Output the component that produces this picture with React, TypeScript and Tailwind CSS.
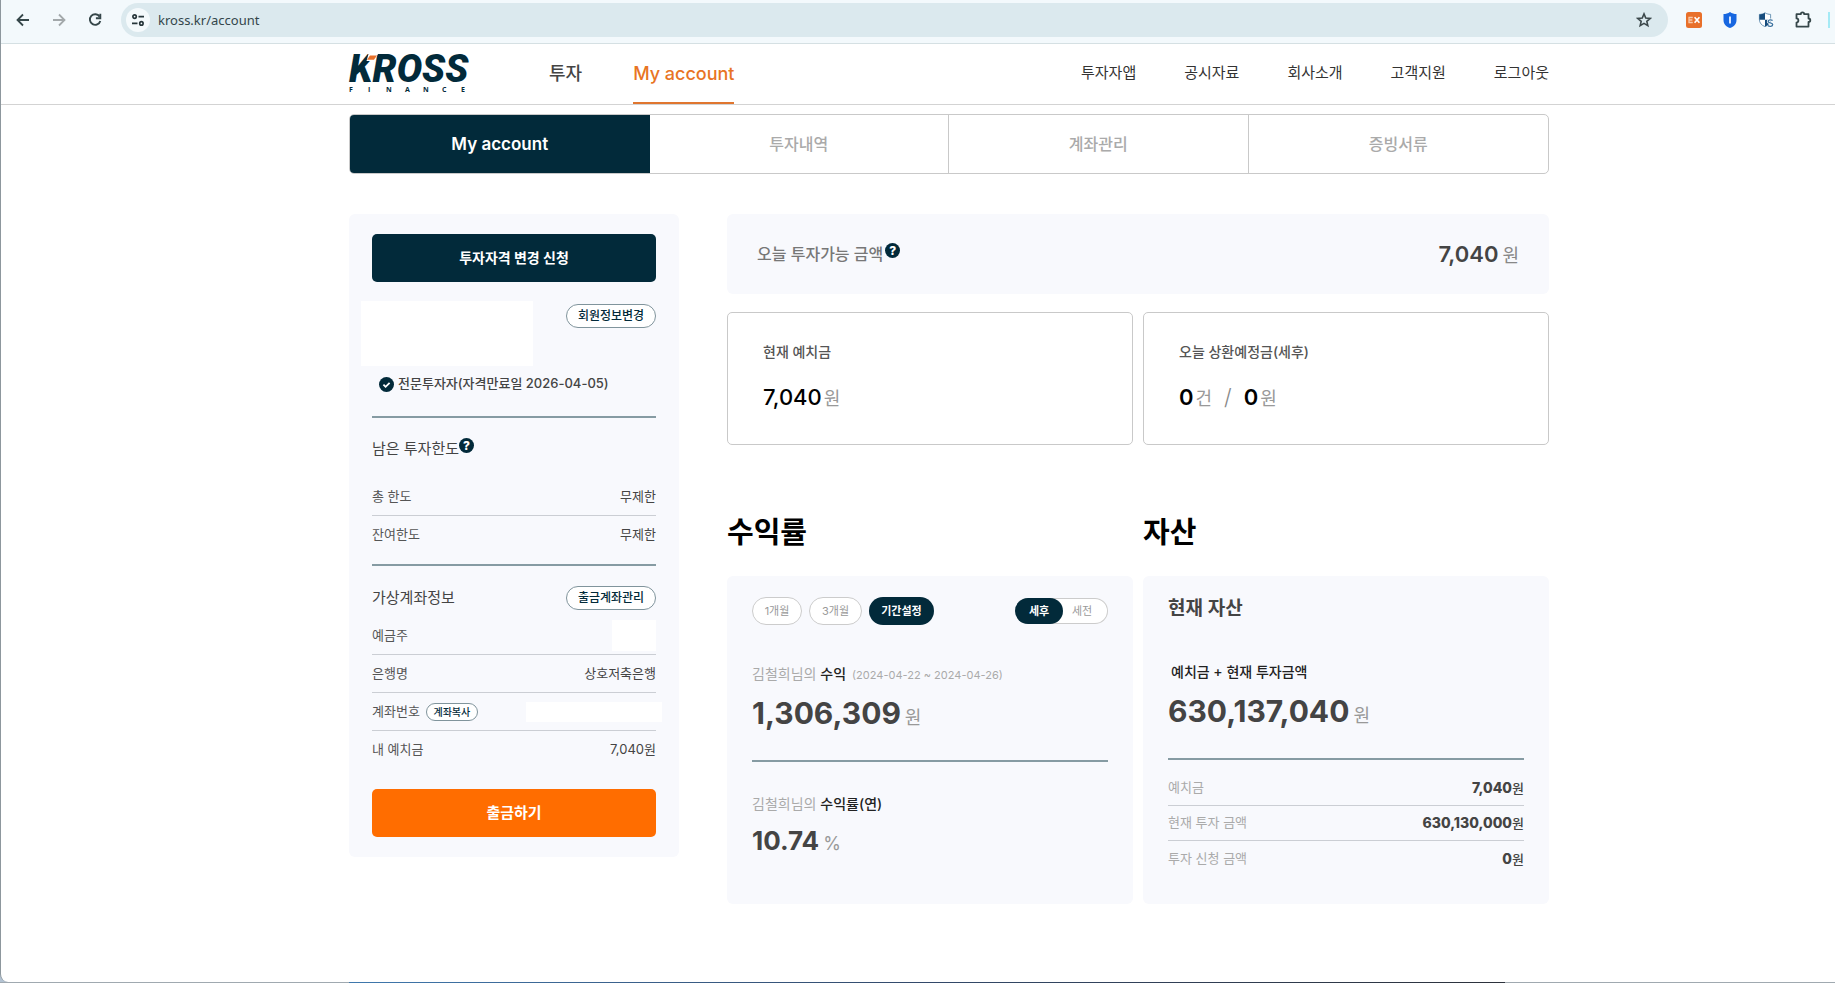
import type { ReactNode } from "react";

function ChromeBar() {
  return (
    <div className="flex h-11 items-center border-b border-[#d5e0e3] bg-[#f3f9fc] pb-1">
      <div className="flex items-center pl-2.5">
        <button type="button" aria-label="뒤로" className="flex h-6 w-6 items-center justify-center">
          <svg width="16" height="16" viewBox="0 0 16 16" fill="none" stroke="#36474a" strokeWidth="1.8">
            <path d="M14 8H3M8 2.5 2.5 8 8 13.5" />
          </svg>
        </button>
        <button type="button" aria-label="앞으로" className="ml-3 flex h-6 w-6 items-center justify-center">
          <svg width="16" height="16" viewBox="0 0 16 16" fill="none" stroke="#a3a9ab" strokeWidth="1.8">
            <path d="M2 8h11M8 2.5 13.5 8 8 13.5" />
          </svg>
        </button>
        <button type="button" aria-label="새로고침" className="ml-3 flex h-6 w-6 items-center justify-center">
          <svg width="16" height="16" viewBox="0 0 16 16" fill="none" stroke="#36474a" strokeWidth="1.9">
            <path d="M12.6 4.6A5.3 5.3 0 1 0 13.3 9" />
            <path d="M13.3 1.8v4.4H8.9" />
          </svg>
        </button>
      </div>
      <div className="ml-3.5 flex h-[34px] flex-1 items-center rounded-full bg-[#dbe9ee] pl-[5px] pr-4">
        <button type="button" aria-label="사이트 정보" className="flex h-6 w-6 items-center justify-center rounded-full bg-[#f5fafc]">
          <svg width="14" height="14" viewBox="0 0 14 14" fill="none" stroke="#27363a" strokeWidth="1.7">
            <circle cx="3.6" cy="3.6" r="1.7" />
            <path d="M7.5 3.6H13M1 10.4h5.5" />
            <circle cx="10.4" cy="10.4" r="1.7" />
          </svg>
        </button>
        <input
          aria-label="주소창"
          defaultValue="kross.kr/account"
          className="ml-2 min-w-0 flex-1 bg-transparent font-['Noto_Sans',sans-serif] text-[13px] leading-5 text-[#33464b] outline-none"
        />
        <button type="button" aria-label="북마크" className="flex h-4 w-4 items-center justify-center">
          <svg width="16" height="16" viewBox="0 0 16 16" fill="none" stroke="#3c484b" strokeWidth="1.6" strokeLinejoin="miter">
            <path d="m8 1.9 1.75 4.1 4.45.4-3.37 2.93 1 4.35L8 11.4l-3.83 2.28 1-4.35L1.8 6.4 6.25 6z" />
          </svg>
        </button>
      </div>
      <div className="flex items-center gap-5 pl-[18px] pr-[5px]">
        <svg width="16" height="16" viewBox="0 0 16 16" role="img" aria-label="EX">
          <rect width="16" height="16" rx="2.5" fill="#e8702a" />
          <path d="M6.8 5.5H3v5h3.8M3 8h3.4" fill="none" stroke="#f9c9a8" strokeWidth="1.3" />
          <path d="m8.6 5.3 4.8 5.4m0-5.4-4.8 5.4" fill="none" stroke="#fff" strokeWidth="1.7" />
        </svg>
        <svg width="16" height="16" viewBox="0 0 16 16" aria-hidden="true">
          <path d="M8 0c2 1.4 4.2 2 6.5 2v6c0 4-2.5 6.6-6.5 8-4-1.4-6.5-4-6.5-8V2C3.8 2 6 1.4 8 0z" fill="#1767e0" />
          <path d="M7 4.5h2v7H7z" fill="#d6e6ff" />
        </svg>
        <svg width="16" height="16" viewBox="0 0 16 16" aria-hidden="true">
          <path d="M7 .8c1.7 1.1 3.6 1.6 5.6 1.6v5c0 3.5-2 5.8-5.6 7.2-3.6-1.4-5.6-3.7-5.6-7.2v-5C3.4 2.4 5.3 1.9 7 .8z" fill="#fff" stroke="#4b7fa5" strokeWidth=".8" />
          <path d="M7 .8v7H1.4V2.4C3.4 2.4 5.3 1.9 7 .8zM7 7.8h5.6c-.2 3.2-2.2 5.5-5.6 6.8z" fill="#174d7d" />
          <path d="M14.6 8.6c-1.3-1.2-4.4-1-4.4.8 0 2 4.5 1 4.5 3.2 0 2-3.4 2.3-4.9.9" fill="none" stroke="#fff" strokeWidth="2.6" />
          <path d="M14.6 8.6c-1.3-1.2-4.4-1-4.4.8 0 2 4.5 1 4.5 3.2 0 2-3.4 2.3-4.9.9" fill="none" stroke="#3d74a0" strokeWidth="1.4" />
        </svg>
        <svg width="18" height="18" viewBox="0 0 18 18" fill="none" stroke="#36474a" strokeWidth="1.8" strokeLinejoin="round" aria-hidden="true">
          <path d="M2.5 3.2h4.3c0-2.4 3.4-2.4 3.4 0h4.3v4.3c2.400 0 2.400 3.400 0 3.400v4.700H2.500v-4c2.500-.3 2.500-4 0-4.200z" />
        </svg>
        <span className="-ml-1 h-4 w-0.5 bg-[#a5eaf5]" />
      </div>
    </div>
  );
}

function Logo() {
  return (
    <svg width="128" height="60" viewBox="-4 -11 128 60" role="img" aria-label="KROSS FINANCE">
      <text x="0" y="27" fontFamily="Roboto, sans-serif" fontSize="38" fontWeight="900" fontStyle="italic" fill="#022a3a">
        KROSS
      </text>
      <path d="M17.5 6 19.5-1H29l-4 7z" fill="#fff" />
      <path d="M18 4.8 21 .5h7l-3 4.300z" fill="#e8702a" />
      <text
        x="0 19 37 56 74 93 112"
        y="37"
        fontFamily="'Open Sans', sans-serif"
        fontSize="7"
        fontWeight="700"
        fill="#022a3a"
      >
        FINANCE
      </text>
    </svg>
  );
}

function Help() {
  return (
    <button type="button" aria-label="도움말" className="mt-px flex h-[15px] w-[15px] items-center justify-center rounded-full bg-[#022a3a] text-xs font-extrabold leading-none text-white">
      ?
    </button>
  );
}

function SideRow({ label, last, children }: { label: ReactNode; last?: boolean; children: ReactNode }) {
  return (
    <div className={`flex h-[38px] items-center justify-between text-[13px] ${last ? "" : "border-b border-[#cbced4]"}`}>
      <dt className="flex items-center text-[#555]">{label}</dt>
      <dd className="text-[#444]">{children}</dd>
    </div>
  );
}

function AssetRow({ label, value, last }: { label: string; value: string; last?: boolean }) {
  return (
    <div className={`flex h-[35px] items-center justify-between ${last ? "" : "border-b border-[#cbced4]"}`}>
      <dt className="text-[13px] text-[#aaa]">{label}</dt>
      <dd className="text-sm text-[#444]">
        <span className="font-extrabold">{value}</span>
        <span className="text-[13px] font-medium">원</span>
      </dd>
    </div>
  );
}

function Sidebar() {
  return (
    <aside className="w-[330px] shrink-0 rounded-md bg-[#f8f9fd] px-[23px] py-5">
      <button type="button" className="h-12 w-full rounded-[5px] bg-[#022a3a] text-sm font-bold text-white">
        투자자격 변경 신청
      </button>
      <div className="mt-[19px] flex items-start justify-between">
        <div className="-ml-[11px] h-[65px] w-[172px] bg-white" />
        <button type="button" className="mt-[3px] h-6 w-[90px] rounded-full border border-[#80949c] bg-white text-xs font-medium text-[#022a3a]">
          회원정보변경
        </button>
      </div>
      <p className="mt-2 flex h-5 items-center gap-1 pl-[7px] text-[13px] font-medium text-[#444]">
        <svg width="15" height="15" viewBox="0 0 15 15" aria-hidden="true">
          <circle cx="7.5" cy="7.5" r="7.5" fill="#022a3a" />
          <path d="m4.4 7.6 2.2 2.2 4-4" fill="none" stroke="#fff" strokeWidth="1.8" />
        </svg>
        전문투자자(자격만료일 2026-04-05)
      </p>
      <hr className="mt-[22px] border-t-2 border-[#869ba3]" />
      <h2 className="mt-[19px] flex h-6 items-start text-[15px] leading-6 text-[#444]">
        남은 투자한도 <Help />
      </h2>
      <dl className="mt-[17px]">
        <SideRow label="총 한도">무제한</SideRow>
        <SideRow label="잔여한도" last>
          무제한
        </SideRow>
      </dl>
      <hr className="mt-2.5 border-t-2 border-[#869ba3]" />
      <div className="mt-5 flex h-6 items-center justify-between">
        <h2 className="text-[15px] text-[#444]">가상계좌정보</h2>
        <button type="button" className="h-6 w-[90px] rounded-full border border-[#80949c] bg-white text-xs font-medium text-[#022a3a]">
          출금계좌관리
        </button>
      </div>
      <dl className="mt-[7px]">
        <SideRow label="예금주">
          <span className="block h-[31px] w-11 bg-white" />
        </SideRow>
        <SideRow label="은행명">상호저축은행</SideRow>
        <SideRow
          label={
            <>
              계좌번호
              <button type="button" className="ml-1.5 h-[18px] w-[52px] rounded-full border border-[#80949c] bg-white text-[10px] font-medium leading-none text-[#022a3a]">
                계좌복사
              </button>
            </>
          }
        >
          <span className="-mr-1.5 block h-5 w-[136px] bg-white" />
        </SideRow>
        <SideRow label="내 예치금" last>
          7,040원
        </SideRow>
      </dl>
      <button type="button" className="mt-5 h-12 w-full rounded-[5px] bg-[#ff6d00] text-[15px] font-bold text-white">
        출금하기
      </button>
    </aside>
  );
}

function ReturnCard() {
  return (
    <div className="rounded-md bg-[#f8f9fd] px-[25px] pb-[43px] pt-[21px]">
      <div className="flex h-7 items-center text-[11px]">
        <button type="button" className="h-7 w-[50px] rounded-full border border-[#ccc] bg-white text-[#999]">1개월</button>
        <button type="button" className="ml-[7px] h-7 w-[53px] rounded-full border border-[#ccc] bg-white text-[#999]">3개월</button>
        <button type="button" className="ml-[7px] h-7 w-[65px] rounded-full bg-[#022a3a] font-bold text-white">기간설정</button>
        <div className="ml-auto flex h-[26px] w-[93px] rounded-full bg-white ring-1 ring-inset ring-[#ccc]">
          <button type="button" className="w-12 rounded-full bg-[#022a3a] font-bold text-white">세후</button>
          <button type="button" className="w-[38px] text-[#999]">세전</button>
        </div>
      </div>
      <p className="mt-[37px] flex h-6 items-baseline whitespace-pre text-sm leading-6 text-[#aaa]">
        김철희님의 <span className="font-medium text-[#222]">수익</span>
        <span className="ml-1.5 text-[11px]">(2024-04-22 ~ 2024-04-26)</span>
      </p>
      <p className="mt-[7px] text-[30px] font-bold leading-10 text-[#444]">
        1,306,309<span className="ml-1 text-lg font-normal leading-none text-[#999]">원</span>
      </p>
      <hr className="mt-[27px] border-t-2 border-[#869ba3]" />
      <p className="mt-[30px] text-sm leading-6 text-[#aaa]">
        김철희님의 <span className="font-medium text-[#222]">수익률(연)</span>
      </p>
      <p className="mt-[5px] text-[26px] font-bold leading-10 text-[#444]">
        10.74<span className="ml-1 text-lg font-normal leading-none text-[#999]">%</span>
      </p>
    </div>
  );
}

function AssetCard() {
  return (
    <div className="rounded-md bg-[#f8f9fd] px-[25px] pb-7 pt-[19px]">
      <h3 className="text-[19px] font-semibold leading-7 text-[#444]">현재 자산</h3>
      <p className="mt-[37px] pl-[3px] text-sm font-medium leading-6 text-[#222]">예치금 + 현재 투자금액</p>
      <p className="mt-[7px] text-[30px] font-bold leading-10 text-[#444]">
        630,137,040<span className="ml-1 text-lg font-normal leading-none text-[#999]">원</span>
      </p>
      <hr className="mt-[27px] border-t-2 border-[#869ba3]" />
      <dl className="mt-[11px]">
        <AssetRow label="예치금" value="7,040" />
        <AssetRow label="현재 투자 금액" value="630,130,000" />
        <AssetRow label="투자 신청 금액" value="0" last />
      </dl>
    </div>
  );
}

const UTILITY = ["투자자앱", "공시자료", "회사소개", "고객지원", "로그아웃"];
const TABS = ["투자내역", "계좌관리", "증빙서류"];

export default function App() {
  return (
    <div className="flex min-h-screen flex-col overflow-hidden bg-[#b3c3d3] font-['Inter','Noto_Sans_CJK_KR',sans-serif]">
      <div className="flex flex-1 flex-col rounded-bl-lg border-l border-[#8d979d] bg-white">
        <ChromeBar />
        <header className="border-b border-[#d3d3d3] pl-[62px]">
          <div className="mx-auto flex h-[60px] max-w-[1200px] items-center">
            <a href="#home" className="-ml-1">
              <Logo />
            </a>
            <nav className="ml-[76px] flex h-full items-center text-lg">
              <a href="#invest" className="font-medium text-[#444]">투자</a>
              <a href="#account" className="relative ml-[51px] flex h-full items-center font-medium text-[#e87424]">
                My account
                <span className="absolute inset-x-0 bottom-0 h-0.5 bg-[#e0762f]" />
              </a>
            </nav>
            <nav className="ml-auto flex gap-12 pb-0.5 text-[15px] text-[#333]">
              {UTILITY.map((t) => (
                <a key={t} href={`#${t}`}>{t}</a>
              ))}
            </nav>
          </div>
        </header>
        <main className="pb-[77px] pl-[62px] pt-[9px]">
          <div className="mx-auto max-w-[1200px]">
            <nav className="grid h-[60px] grid-cols-4 overflow-hidden rounded-[5px] border border-[#c9c9c9]">
              <a href="#account" className="flex items-center justify-center bg-[#022a3a] pt-0.5 text-[17px] font-semibold text-white">My account</a>
              {TABS.map((t, i) => (
                <a
                  key={t}
                  href={`#${t}`}
                  className={`flex items-center justify-center text-base font-medium text-[#aaa] ${i < 2 ? "border-r border-[#c9c9c9]" : ""}`}
                >
                  {t}
                </a>
              ))}
            </nav>
            <div className="mt-10 flex items-start gap-12">
              <Sidebar />
              <div className="min-w-0 flex-1">
                <section className="flex h-20 items-center justify-between rounded-md bg-[#f8f9fd] px-[30px]">
                  <h2 className="flex items-start gap-0.5 text-base font-medium leading-6 text-[#777]">
                    오늘 투자가능 금액 <Help />
                  </h2>
                  <p className="text-[22px] font-semibold text-[#444]">
                    7,040<span className="ml-1 text-lg font-normal text-[#888]">원</span>
                  </p>
                </section>
                <div className="mt-[18px] grid grid-cols-2 gap-2.5">
                  <section className="rounded-[5px] border border-[#c9c9c9] px-[35px] pb-8 pt-[29px]">
                    <h2 className="text-sm font-medium leading-5 text-[#555]">현재 예치금</h2>
                    <p className="mt-5 text-[22px] font-medium leading-[30px] text-black">
                      7,040<span className="ml-0.5 text-lg font-normal leading-none text-[#999]">원</span>
                    </p>
                  </section>
                  <section className="rounded-[5px] border border-[#c9c9c9] px-[35px] pb-8 pt-[29px]">
                    <h2 className="text-sm font-medium leading-5 text-[#555]">오늘 상환예정금(세후)</h2>
                    <p className="mt-5 text-[22px] font-semibold leading-[30px] text-black">
                      0<span className="ml-0.5 text-lg font-normal leading-none text-[#999]">건</span>
                      <span className="mx-3 font-light text-[#888]">/</span>
                      0<span className="ml-0.5 text-lg font-normal leading-none text-[#999]">원</span>
                    </p>
                  </section>
                </div>
                <div className="mt-[68px] grid grid-cols-2 gap-2.5">
                  <section>
                    <h2 className="mb-[23px] text-[29px] font-bold leading-10 text-black">수익률</h2>
                    <ReturnCard />
                  </section>
                  <section>
                    <h2 className="mb-[23px] text-[29px] font-bold leading-10 text-black">자산</h2>
                    <AssetCard />
                  </section>
                </div>
              </div>
            </div>
          </div>
        </main>
      </div>
      <div className="flex h-px">
        <div className="w-[19%] bg-[#a0a9b0]" />
        <div className="flex-1 bg-linear-to-r from-[#3f78ad] via-[#33496a] to-[#2c323c]" />
        <div className="w-[18%] bg-[#a0a9b0]" />
      </div>
    </div>
  );
}
